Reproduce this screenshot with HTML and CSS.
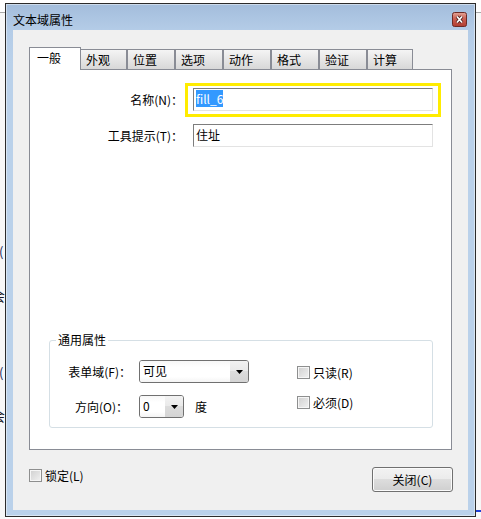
FILE: index.html
```html
<!DOCTYPE html>
<html lang="zh-CN">
<head>
  <meta charset="UTF-8" />
  <meta name="viewport" content="width=device-width, initial-scale=1.0" />
  <title>文本域属性</title>
  <link rel="stylesheet" href="styles.css">
</head>
<body>

<!-- Desktop strip left of the dialog -->
<div class="desk-edge desk-left">
  <span class="desk-glyph g1">(</span>
  <span class="desk-glyph g2">会</span>
  <span class="desk-glyph g3">(</span>
  <span class="desk-glyph g4">会</span>
</div>

<!-- Dialog -->
<div class="window">
  <div class="titlebar">
    <span class="title">文本域属性</span>
    <span class="close-box">
      <svg width="15" height="15" viewBox="0 0 15 15">
        <defs>
          <linearGradient id="closeGrad" x1="0" y1="0" x2="0" y2="1">
            <stop offset="0" stop-color="#e3a597" />
            <stop offset="0.45" stop-color="#cb5f52" />
            <stop offset="1" stop-color="#b03c30" />
          </linearGradient>
        </defs>
        <rect x="0.5" y="0.5" width="14" height="14" rx="2" fill="url(#closeGrad)" stroke="#6e2b26" />
        <path d="M5 4.5l5 6M10 4.5l-5 6" stroke="#4d1d19" stroke-width="3.4" />
        <path d="M5 4.5l5 6M10 4.5l-5 6" stroke="#ffffff" stroke-width="1.7" />
      </svg>
    </span>
  </div>

  <div class="client">
    <!-- Tabs -->
    <div class="tabs">
      <span class="tab tab-active">一般</span>
      <span class="tab tab-w47">外观</span>
      <span class="tab">位置</span>
      <span class="tab">选项</span>
      <span class="tab">动作</span>
      <span class="tab">格式</span>
      <span class="tab">验证</span>
      <span class="tab tab-w46">计算</span>
    </div>

    <div class="panel">
      <div class="fields">
        <label class="field-label">名称(N)：</label>
        <div class="focus-ring">
          <div class="textbox"><span class="sel">fill_6</span></div>
        </div>

        <label class="field-label">工具提示(T)：</label>
        <div class="textbox">住址</div>
      </div>

      <!-- Common properties -->
      <div class="group">
        <span class="group-title">通用属性</span>
        <div class="group-body">
          <div class="group-fields">
            <span class="field-label">表单域(F)：</span>
            <div class="combo combo-wide">
              <span class="combo-text">可见</span>
              <span class="combo-btn"><svg width="7" height="4" viewBox="0 0 7 4"><path d="M0 0h7L3.5 4z" fill="#000" /></svg></span>
            </div>

            <span class="field-label field-label-inset">方向(O)：</span>
            <div class="combo-row">
              <div class="combo combo-narrow">
                <span class="combo-text">0</span>
                <span class="combo-btn"><svg width="7" height="4" viewBox="0 0 7 4"><path d="M0 0h7L3.5 4z" fill="#000" /></svg></span>
              </div>
              <span class="unit">度</span>
            </div>
          </div>

          <div class="group-checks">
            <label class="check"><span class="check-box"></span>只读(R)</label>
            <label class="check"><span class="check-box"></span>必须(D)</label>
          </div>
        </div>
      </div>
    </div>

    <div class="footer">
      <label class="check check-lock"><span class="check-box"></span>锁定(L)</label>
      <button class="btn" type="button">关闭(C)</button>
    </div>
  </div>
</div>

<!-- Desktop strip right of the dialog -->
<div class="desk-edge desk-right">
  <span class="desk-mark"></span>
</div>

</body>
</html>
```

FILE: styles.css
```css
/* General */
* {
  box-sizing: border-box;
}

body {
  margin: 0;
  height: 519px;
  overflow: hidden;
  display: flex;
  align-items: flex-start;
  background: #ffffff;
  font-family: "Noto Sans CJK SC", "Liberation Sans", sans-serif;
  font-size: 12px;
  line-height: 16px;
  color: #000000;
}

/* Desktop behind the dialog */
.desk-edge {
  flex: none;
  width: 5px;
  height: 519px;
  overflow: hidden;
  background: linear-gradient(#ffffff 12px, #a9a9a9 12px, #a9a9a9 13px, #f7f7f7 13px);
}

.desk-right {
  display: flex;
  flex-direction: column;
}

.desk-glyph {
  display: block;
  font-size: 14px;
  line-height: 16px;
  color: #1a1a2a;
}

.g1 { margin-top: 244px; margin-left: -1px; font-size: 13px; color: #1b2a5a; }
.g2 { margin-top: 27px; margin-left: -9px; }
.g3 { margin-top: 62px; margin-left: -1px; font-size: 13px; color: #1b2a5a; }
.g4 { margin-top: 26px; margin-left: -9px; }

.desk-mark {
  margin-top: 510px;
  height: 2px;
  background: #1f3fd8;
}

/* Window frame */
.window {
  flex: none;
  width: 471px;
  height: 514px;
  margin-top: 3px;
  border: 1px solid #2b2b2b;
  background: linear-gradient(#a3bddc 0, #b4cce7 26px, #bad1ea 60px, #bad1ea);
  box-shadow: inset 0 0 0 1px rgba(255, 255, 255, 0.45);
  padding: 0 7px 6px 7px;
  display: flex;
  flex-direction: column;
}

.titlebar {
  height: 26px;
  padding-top: 8px;
  margin-right: 1px;
  display: flex;
  justify-content: space-between;
  align-items: flex-start;
}

.title {
  line-height: 16px;
}

.close-box {
  display: block;
  width: 15px;
  height: 15px;
}

.close-box svg {
  display: block;
}

/* Client area */
.client {
  flex: 1;
  background: #f0f0f0;
  padding: 17px 16px 0 16px;
  display: flex;
  flex-direction: column;
}

/* Tabs */
.tabs {
  height: 22px;
  display: flex;
  align-items: flex-end;
}

.tab {
  width: 48px;
  height: 20px;
  padding-left: 5px;
  line-height: 19px;
  border: 1px solid #898c95;
  border-bottom: none;
  background: linear-gradient(#f4f4f4, #e6e6e6 50%, #d8d8d8);
  white-space: nowrap;
}

.tab-w47 { width: 47px; }
.tab-w46 { width: 46px; }

.tab-active {
  position: relative;
  z-index: 1;
  width: 52px;
  height: 23px;
  margin-bottom: -1px;
  margin-right: -1px;
  padding-left: 7px;
  line-height: 20px;
  background: #ffffff;
}

/* Panel */
.panel {
  height: 381px;
  border: 1px solid #898c95;
  background: #ffffff;
  display: flex;
  flex-direction: column;
}

.fields {
  margin-top: 18px;
  display: grid;
  grid-template-columns: 153px 240px;
  column-gap: 10px;
  row-gap: 13px;
  align-items: center;
}

.field-label {
  text-align: right;
  white-space: nowrap;
}

.field-label-inset {
  padding-right: 3px;
}

.focus-ring {
  margin: -5px -8px -6px -8px;
  padding: 2px 5px 3px 5px;
  border: 3px solid #ffec00;
}

.textbox {
  height: 23px;
  padding: 0 2px;
  line-height: 20px;
  border: 1px solid;
  border-color: #7d7d7d #e3e3e3 #e3e3e3 #7d7d7d;
  background: #ffffff;
  white-space: nowrap;
}

.sel {
  background: #3399ff;
  color: #ffffff;
}

/* Group box */
.group {
  margin: auto 18px 21px 19px;
  padding-bottom: 9px;
  border: 1px solid #d5dfe5;
  border-radius: 3px;
  display: flex;
  flex-direction: column;
}

.group-title {
  align-self: flex-start;
  margin: -9px 0 0 6px;
  padding: 0 2px;
  line-height: 15px;
  background: #ffffff;
}

.group-body {
  margin-top: 13px;
  display: flex;
  align-items: flex-start;
}

.group-fields {
  display: grid;
  grid-template-columns: 81px 110px;
  column-gap: 8px;
  row-gap: 12px;
  align-items: center;
}

.group-checks {
  margin-left: 48px;
  padding-top: 6px;
  display: flex;
  flex-direction: column;
  gap: 17px;
}

/* Combo boxes */
.combo {
  height: 23px;
  display: flex;
  border: 1px solid #707070;
  border-radius: 3px;
  overflow: hidden;
  background: #ffffff;
}

.combo-wide { width: 110px; }
.combo-narrow { width: 45px; }

.combo-text {
  flex: 1;
  padding-left: 3px;
  line-height: 19px;
  background: linear-gradient(#f7f7f7, #ffffff 30%, #ffffff 75%, #f4f4f4);
}

.combo-btn {
  width: 18px;
  display: flex;
  align-items: center;
  justify-content: center;
  background: linear-gradient(#f2f2f2, #e9e9e9 50%, #dcdcdc 50%, #d4d4d4);
}

.combo-btn svg {
  display: block;
  margin-left: 1px;
}

.combo-row {
  display: flex;
  align-items: center;
  gap: 11px;
}

/* Checkboxes */
.check {
  display: flex;
  align-items: center;
  gap: 3px;
  line-height: 13px;
  white-space: nowrap;
}

.check-box {
  width: 13px;
  height: 13px;
  border: 1px solid #8e8f8f;
  background: linear-gradient(135deg, #cfcfcf, #f2f2f2);
  box-shadow: inset 0 0 0 1px #f6f6f6;
}

/* Footer */
.footer {
  margin-top: 17px;
  margin-right: -1px;
  display: flex;
  justify-content: space-between;
  align-items: flex-start;
}

.check-lock {
  margin-top: 2px;
}

.btn {
  width: 81px;
  height: 25px;
  padding: 0;
  border: 1px solid #707070;
  border-radius: 3px;
  background: linear-gradient(#f2f2f2, #ebebeb 50%, #dddddd 50%, #cfcfcf);
  box-shadow: inset 0 0 0 1px #fbfbfb;
  font-family: inherit;
  font-size: 12px;
  line-height: 20px;
  color: #000000;
}
```
